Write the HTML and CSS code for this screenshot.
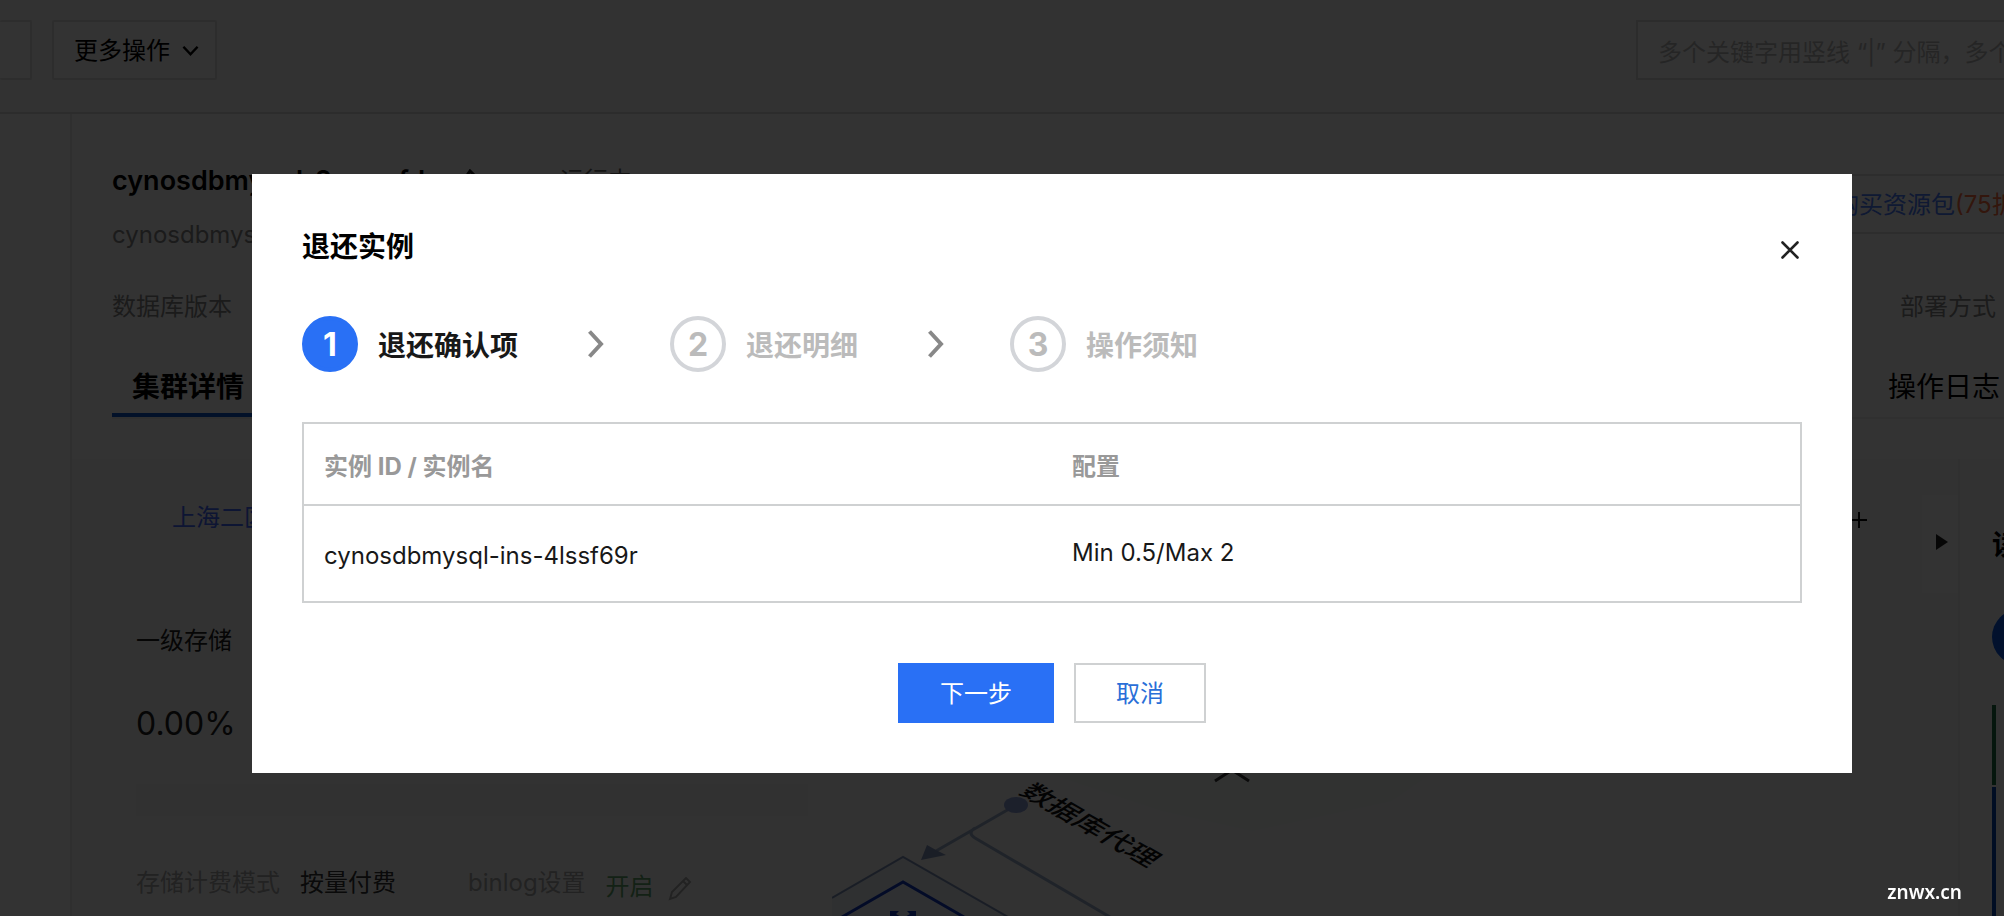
FILE: index.html
```html
<!DOCTYPE html>
<html lang="zh-CN">
<head>
<meta charset="utf-8">
<title>退还实例</title>
<link rel="stylesheet" href="styles.css">
</head>
<body>
<div class="page">
  <header class="topbar">
    <div class="topbar-actions">
      <button class="tool-btn tool-btn-cut" type="button" aria-label="操作"></button>
      <button class="tool-btn" type="button">更多操作
        <svg width="17" height="12" viewBox="0 0 18 12" fill="none" stroke="#000" stroke-width="2.600"><path d="M1.500 1.500 9 9.500 16.500 1.500"/></svg>
      </button>
    </div>
    <input class="search" type="text" aria-label="搜索" placeholder="多个关键字用竖线 “|” 分隔，多个过滤标签用回车键分隔">
  </header>
  <div class="body">
    <aside class="side"></aside>
    <main class="main">
      <section class="head">
        <div class="head-info">
          <h1 class="name">cynosdbmysql-2surmfdg
            <svg width="24" height="24" viewBox="0 0 24 24" fill="none" stroke="#222" stroke-width="3"><path d="M2 22l1-7L12 2l7 7L9 20z"/></svg>
            <span class="status">运行中</span>
          </h1>
          <div class="alias">cynosdbmysql</div>
        </div>
        <a class="buy" href="#">购买资源包<span class="sale">(75折)</span></a>
      </section>
      <div class="meta"><span>数据库版本</span><span class="meta-right">部署方式</span></div>
      <nav class="tabs">
        <a class="tab tab-on" href="#">集群详情</a>
        <a class="tab" href="#">操作日志</a>
      </nav>
      <section class="detail">
        <div class="left-col">
          <div class="zone"><a href="#">上海二区</a></div>
          <div class="card">
            <div class="card-title">一级存储</div>
            <div class="usage">0.00%</div>
            <div class="bar"></div>
            <div class="facts">
              <span class="label">存储计费模式</span><span class="value">按量付费</span>
              <span class="label label-2">binlog设置</span><span class="on">开启</span>
              <svg class="pencil" width="24" height="24" viewBox="0 0 24 24" fill="none" stroke="#aaa" stroke-width="2"><path d="M2 22l2-7L18 1l4 4L8 20zM15 4l4 4"/></svg>
            </div>
          </div>
        </div>
        <div class="canvas">
          <svg class="topology" width="700" height="456" viewBox="0 0 700 456" fill="none">
            <path d="M215 312H600L560 340 420 370 330 350z" fill="#f3f8f6"/>
            <path d="M71 396 0 437V456H176z" fill="#e9eef6"/>
            <path d="M71 421 10 456H132z" fill="#ebf0f8"/>
            <path d="M0 437 71 396 176 456" stroke="#7f93bb" stroke-width="2"/>
            <path d="M10 456 71 421 132 456" stroke="#1238c4" stroke-width="3"/>
            <path d="M184 344 104 390M143 367q-8 5 0 10L278 456" stroke="#9cadcd" stroke-width="3"/>
            <ellipse cx="184" cy="344" rx="12" ry="8" fill="#8c9ed8"/>
            <path d="M89 399 95 384 104 389 114 394z" fill="#8494be"/>
            <path d="M58 450h9l-3 3 7 4 7-4-3-3h9v6H58z" fill="#1238c4"/>
            <path d="M383 320 400 309 417 320" stroke="#333" stroke-width="3"/>
            <text class="iso" transform="matrix(.87 .5 -.7 .5 186 332)">数据库代理</text>
          </svg>
          <button class="plus" type="button" aria-label="放大"><svg width="16" height="16" viewBox="0 0 16 16" stroke="#000" stroke-width="2"><path d="M0 8H16M8 0V16"/></svg></button>
          <button class="fold" type="button" aria-label="展开"><svg width="12" height="16" viewBox="0 0 12 16"><path d="M0 0 12 8 0 16z" fill="#222"/></svg></button>
        </div>
        <aside class="nodes">
          <div class="nodes-title">读写</div>
          <div class="node-dot"></div>
          <div class="rail rail-green"></div>
          <div class="rail rail-blue"></div>
        </aside>
      </section>
    </main>
  </div>
</div>

<div class="mask">
  <div class="dialog" role="dialog" aria-labelledby="dialog-title">
    <div class="dialog-head">
      <h2 id="dialog-title">退还实例</h2>
      <button class="close" type="button" aria-label="关闭"><svg width="20" height="20" viewBox="0 0 20 20" stroke="#222" stroke-width="2.600" stroke-linecap="round"><path d="M2.500 2.500 17.500 17.500M17.500 2.500 2.500 17.500"/></svg></button>
    </div>
    <ol class="steps">
      <li class="step step-on"><span class="num">1</span><span class="step-label">退还确认项</span></li>
      <li class="arrow"><svg width="16" height="28" viewBox="0 0 16 28" fill="none" stroke="#888" stroke-width="4"><path d="M1.500 1.500 13 14 1.500 26.500"/></svg></li>
      <li class="step"><span class="num">2</span><span class="step-label">退还明细</span></li>
      <li class="arrow"><svg width="16" height="28" viewBox="0 0 16 28" fill="none" stroke="#888" stroke-width="4"><path d="M1.500 1.500 13 14 1.500 26.500"/></svg></li>
      <li class="step"><span class="num">3</span><span class="step-label">操作须知</span></li>
    </ol>
    <table class="grid">
      <thead><tr><th>实例 ID / 实例名</th><th>配置</th></tr></thead>
      <tbody><tr><td class="id">cynosdbmysql-ins-4lssf69r</td><td>Min 0.5/Max 2</td></tr></tbody>
    </table>
    <div class="buttons">
      <button class="btn btn-primary" type="button">下一步</button>
      <button class="btn" type="button">取消</button>
    </div>
  </div>
</div>
<div class="mark">znwx.cn</div>
</body>
</html>
```

FILE: styles.css
```css
* { box-sizing: border-box; }

body {
  margin: 0;
  height: 100vh;
  overflow: hidden;
  background: #fff;
  color: #000;
  font: 24px/32px Inter, "Noto Sans CJK SC", sans-serif;
}

a { text-decoration: none; }
h1, h2, ol { margin: 0; padding: 0; }
button, input { font: inherit; color: inherit; }

.page {
  display: flex;
  flex-direction: column;
  height: 100vh;
  overflow: hidden;
}

/* top bar */
.topbar {
  display: flex;
  justify-content: space-between;
  flex: none;
  height: 114px;
  padding-top: 20px;
  background: #f8f8f8;
  border-bottom: 2px solid #dcdcdc;
}
.topbar-actions { display: flex; gap: 20px; }
.tool-btn {
  display: flex;
  align-items: center;
  gap: 12px;
  height: 60px;
  padding: 2px 16px 0 20px;
  background: #fff;
  border: 2px solid #e0e0e0;
  border-radius: 2px;
}
.tool-btn-cut { width: 32px; border-left: 0; padding: 0; }
.search {
  width: 368px;
  height: 60px;
  padding: 4px 0 0 20px;
  background: #fff;
  border: 2px solid #dcdcdc;
  border-right: 0;
}
.search::placeholder { color: #bbb; opacity: 1; }

/* cluster page */
.body { display: flex; flex: 1; min-height: 0; }
.side { flex: none; width: 72px; background: #fcfcfd; border-right: 2px solid #ebebeb; }
.main { flex: 1; min-width: 0; display: flex; flex-direction: column; }
.head {
  display: flex;
  justify-content: space-between;
  padding: 47px 0 0 40px;
}
.name {
  display: flex;
  align-items: center;
  height: 40px;
  font-size: 27px;
  font-weight: 600;
  white-space: nowrap;
}
.name svg { margin: 0 78px 0 16px; }
.status { font-size: 24px; font-weight: 400; color: #666; }
.alias { margin-top: 18px; color: #888; }
.buy {
  height: 60px;
  margin-top: 13px;
  padding: 13px 0 0 22px;
  width: 193px;
  border: 2px solid #e0e0e0;
  border-right: 0;
  color: #4a7cff;
  white-space: nowrap;
  overflow: hidden;
}
.sale { color: #ff7040; }
.meta {
  display: flex;
  justify-content: space-between;
  margin-top: 40px;
  padding: 0 8px 0 40px;
  color: #888;
}
.tabs {
  display: flex;
  justify-content: space-between;
  margin: 43px 0 0 40px;
  border-bottom: 2px solid #ededed;
  font-size: 28px;
}
.tab { height: 51px; padding: 0 4px 0 20px; line-height: 42px; color: #000; }
.tab-on { padding-right: 20px; border-bottom: 4px solid #0a58cc; font-weight: 700; }

.detail { display: flex; flex: 1; min-height: 0; margin-top: 40px; background: #f9f9f9; }
.left-col { flex: none; width: 760px; padding-left: 32px; display: flex; flex-direction: column; }
.zone { height: 140px; padding: 43px 0 0 68px; background: #f7f7f8; }
.zone a { color: #4468ff; }
.card { flex: 1; padding: 26px 24px 0 32px; background: #fbfbfb; }
.card-title { color: #222; }
.usage { margin-top: 47px; font-size: 32px; line-height: 40px; color: #222; }
.bar { height: 32px; margin-top: 40px; background: #f6f6f6; }
.facts { display: flex; align-items: center; height: 40px; margin-top: 47px; color: #333; white-space: nowrap; }
.label { color: #aaa; }
.value { margin-left: 20px; }
.label-2 { margin-left: 72px; }
.on { margin: 8px 14px 0 20px; color: #5fa56c; }
.pencil { margin-top: 12px; }

.canvas { position: relative; flex: 1; min-width: 0; background: #f8f8f8; }
.topology { position: absolute; left: 0; top: 2px; }
.iso { font-size: 30px; font-weight: 500; fill: #111; }
.plus {
  position: absolute;
  right: 73px;
  top: 36px;
  width: 52px;
  height: 50px;
  padding: 0;
  border: 0;
  background: #fbfbfb;
  line-height: 0;
}
.fold {
  position: absolute;
  right: 0;
  top: 36px;
  width: 36px;
  height: 98px;
  padding: 0 0 4px 4px;
  border: 0;
  background: #fdfdfd;
}
.nodes {
  flex: none;
  width: 46px;
  padding: 68px 0 0 32px;
  overflow: hidden;
  border-left: 2px solid #efefef;
  background: #fbfbfb;
}
.nodes-title { font-size: 28px; line-height: 36px; font-weight: 700; white-space: nowrap; }
.node-dot { width: 56px; height: 56px; margin-top: 46px; border-radius: 50%; background: #0a58e0; }
.rail { width: 4px; }
.rail-green { height: 80px; margin: 40px 0 2px; background: #1c7040; }
.rail-blue { height: 132px; background: #0040b0; }

/* dialog */
.mask {
  position: fixed;
  inset: 0;
  padding: 174px 152px 0 252px;
  background: rgba(0, 0, 0, .8);
}
.dialog { padding: 50px; background: #fff; }
.dialog-head { display: flex; justify-content: space-between; height: 92px; }
.dialog-head h2 { font-size: 28px; line-height: 46px; font-weight: 700; }
.close { height: 32px; margin: 10px 2px 0 0; padding: 0; border: 0; background: none; line-height: 0; }
.steps { display: flex; align-items: center; height: 56px; list-style: none; }
.step {
  display: flex;
  align-items: center;
  gap: 20px;
  font-size: 28px;
  font-weight: 700;
  color: #bbb;
}
.step-label { padding-top: 3px; }
.num {
  display: flex;
  align-items: center;
  justify-content: center;
  width: 56px;
  height: 56px;
  padding-top: 2px;
  border: 4px solid #d3d5d9;
  border-radius: 50%;
  font-size: 32px;
}
.step-on { color: #181818; }
.step-on .num { border-color: #2970f5; background: #2970f5; color: #fff; }
.arrow { margin: 0 66px 0 70px; line-height: 0; }

.grid {
  width: 100%;
  margin-top: 50px;
  border: 2px solid #cfd1d2;
  border-collapse: collapse;
  table-layout: fixed;
}
.grid th, .grid td { padding: 0 20px; text-align: left; vertical-align: middle; }
.grid th { height: 82px; padding-top: 5px; border-bottom: 2px solid #cfd1d2; color: #999; font-weight: 700; }
.grid td { height: 97px; padding-bottom: 2px; color: #181818; }
.grid .id { padding: 4px 20px 0; }

.buttons { display: flex; justify-content: center; gap: 20px; margin-top: 60px; }
.btn {
  height: 60px;
  padding: 2px 40px 0;
  border: 2px solid #cfd1d2;
  background: #fff;
  color: #2a6fd8;
}
.btn-primary { border-color: #2970f5; background: #2970f5; color: #fff; }

.mark {
  position: fixed;
  right: 42px;
  bottom: 10px;
  color: #fff;
  font: 600 19px/28px "Noto Sans", sans-serif;
}
```
